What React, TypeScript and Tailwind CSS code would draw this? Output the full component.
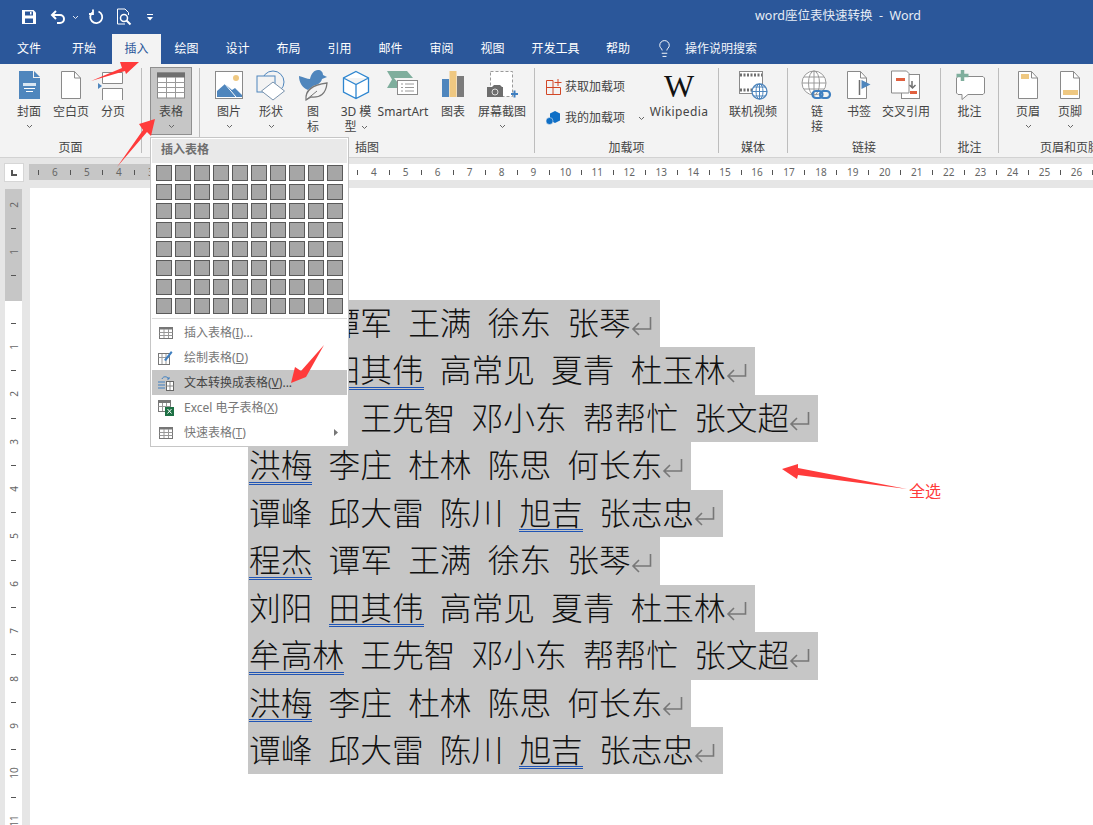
import { Lightbulb } from 'lucide-react';
import type { ReactNode } from 'react';

const UI_FONT = "font-['Noto_Sans','Noto_Sans_CJK_SC',sans-serif]";

// u = double blue underline from the grammar checker
const lines: { t: string; u?: boolean }[][] = [
  [{ t: '程杰', u: true }, { t: '谭军' }, { t: '王满' }, { t: '徐东' }, { t: '张琴' }],
  [{ t: '刘阳' }, { t: '田其伟', u: true }, { t: '高常见' }, { t: '夏青' }, { t: '杜玉林' }],
  [{ t: '牟高林', u: true }, { t: '王先智' }, { t: '邓小东' }, { t: '帮帮忙' }, { t: '张文超' }],
  [{ t: '洪梅', u: true }, { t: '李庄' }, { t: '杜林' }, { t: '陈思' }, { t: '何长东' }],
  [{ t: '谭峰' }, { t: '邱大雷' }, { t: '陈川' }, { t: '旭吉', u: true }, { t: '张志忠' }],
];

const tabs = [
  { label: '文件', cls: 'w-[58px] text-white' },
  { label: '开始', cls: 'w-[52px] text-white' },
  { label: '插入', cls: 'w-[49px] ml-[2px] bg-[#f3f3f3] text-[#2b579a]' },
  { label: '绘图', cls: 'w-[51px] text-white' },
  { label: '设计', cls: 'w-[51px] text-white' },
  { label: '布局', cls: 'w-[51px] text-white' },
  { label: '引用', cls: 'w-[51px] text-white' },
  { label: '邮件', cls: 'w-[51px] text-white' },
  { label: '审阅', cls: 'w-[51px] text-white' },
  { label: '视图', cls: 'w-[51px] text-white' },
  { label: '开发工具', cls: 'w-[75px] text-white' },
  { label: '帮助', cls: 'w-[50px] text-white' },
];

function Chevron() {
  return (
    <svg width="7" height="5" viewBox="0 0 7 5" className="mx-auto">
      <path d="M1 1l2.5 2.5L6 1" fill="none" stroke="#666" strokeWidth="1" />
    </svg>
  );
}

function Sep() {
  return <div className="w-px my-[4px] bg-[#bdbdbd] shrink-0" />;
}

function RibbonButton({ w, icon, label, chevron, active }: { w: string; icon: ReactNode; label: ReactNode; chevron?: boolean; active?: boolean }) {
  return (
    <div className={`${w} shrink-0 h-[68px] flex flex-col items-center text-center leading-[14.5px] ${active ? 'bg-[#c6c6c6] border border-[#8f8f8f] pt-[2px]' : 'pt-[3px]'}`}>
      <div className="h-[35px] w-full flex justify-center items-start">{icon}</div>
      <div className="whitespace-nowrap">{label}</div>
      {chevron && <div className="h-[14px] flex items-center"><Chevron /></div>}
    </div>
  );
}

function Group({ w, pl, label, children }: { w: string; pl?: string; label: string; children: ReactNode }) {
  return (
    <div className={`${w} shrink-0 flex flex-col`}>
      <div className={`h-[73px] pt-[3px] flex ${pl ?? ''}`}>{children}</div>
      <div className="h-[20px] leading-[22px] text-center whitespace-nowrap">{label}</div>
    </div>
  );
}

function Page({ children, fill = '#fff' }: { children?: ReactNode; fill?: string }) {
  return (
    <svg width="24" height="30" viewBox="0 0 24 30">
      <path d="M2.5 1.5h13l6 6.5v20.5h-19z" fill={fill} stroke="#8a8a8a" />
      <path d="M15.5 1.5v6.5h6" fill="none" stroke="#8a8a8a" />
      {children}
    </svg>
  );
}

function CoverIcon() {
  return (
    <svg width="24" height="30" viewBox="0 0 24 30">
      <path d="M2 1h14v7h7v21H2z" fill="#4f86bd" />
      <path d="M17 1l6 6h-6z" fill="#4f86bd" />
      <path d="M6 13h13v3H6z" fill="#d9e6f2" />
      <path d="M7 18.5h11M9 21.5h7" stroke="#fff" />
    </svg>
  );
}

function BreakIcon() {
  return (
    <svg width="30" height="32" viewBox="0 0 30 32">
      <path d="M4.5 2.5h20v11h-20z" fill="#fff" stroke="#8a8a8a" />
      <path d="M4.5 30v-11.5h20V30" fill="#fff" stroke="#8a8a8a" />
      <path d="M0 13l4 3-4 3z" fill="#4f86bd" />
    </svg>
  );
}

function TableIcon() {
  return (
    <svg width="30" height="27" viewBox="0 0 30 27">
      <rect x="1.5" y="1" width="27" height="25" fill="#fff" stroke="#8a8a8a" />
      <rect x="1" y="0.5" width="28" height="5" fill="#6f6f6f" />
      <path d="M1.5 10.5h27M1.5 15.5h27M1.5 20.5h27M10.5 5v21M19.5 5v21" stroke="#9a9a9a" />
    </svg>
  );
}

function PictureIcon() {
  return (
    <svg width="30" height="30" viewBox="0 0 30 30">
      <rect x="1.5" y="1.5" width="27" height="27" fill="#fff" stroke="#8a8a8a" />
      <circle cx="22" cy="8" r="3" fill="#efc881" />
      <path d="M3 27v-6l8-7 7 6 3-2 7 7v2z" fill="#4f86bd" />
      <path d="M11 14l11 13" stroke="#fff" />
    </svg>
  );
}

function ShapesIcon() {
  return (
    <svg width="32" height="32" viewBox="0 0 32 32">
      <circle cx="18" cy="12" r="11" fill="none" stroke="#4f86bd" />
      <rect x="2" y="6" width="18" height="16" fill="#f3f3f3" stroke="#4f86bd" />
      <path d="M18 12l11.5 9-11.5 9-11.5-9z" fill="#fff" stroke="#7a93ad" />
    </svg>
  );
}

function IconsIcon() {
  return (
    <svg width="32" height="32" viewBox="0 0 32 32">
      <path d="M2 6c5 1 8 3 11 3 1-5 4-9 8-9 3 0 5 2 5 5l4 2-5 2c-1 4-5 6-9 7l-5 4C5 18 2 12 2 6z" fill="#4f86bd" />
      <path d="M9 30c-1-9 5-15 21-17-1 11-7 15-16 14z" fill="#f3f3f3" stroke="#777" strokeWidth="1.3" />
      <path d="M9 30l11-9" stroke="#777" />
    </svg>
  );
}

function CubeIcon() {
  return (
    <svg width="30" height="30" viewBox="0 0 30 30">
      <path d="M15 1.5L27.5 8v14L15 28.5 2.5 22V8zM2.5 8L15 14.5 27.5 8M15 14.5v14" fill="#fff" stroke="#2e86d0" strokeWidth="1.3" />
    </svg>
  );
}

function SmartArtIcon() {
  return (
    <svg width="32" height="30" viewBox="0 0 32 30">
      <path d="M0 1h20l6 7H7l5 6-2 4H0l5-8.5z" fill="#7fae9d" />
      <rect x="10.5" y="10.5" width="20" height="14" fill="#fff" stroke="#8a8a8a" />
      <path d="M14 14h2M18 14h9M14 17.5h2M18 17.5h9M14 21h2M18 21h9" stroke="#9a9a9a" />
    </svg>
  );
}

function ChartIcon() {
  return (
    <svg width="24" height="28" viewBox="0 0 24 28">
      <rect x="1" y="9" width="7" height="18" fill="#4f86bd" />
      <rect x="8.5" y="1" width="7" height="26" fill="#efc881" />
      <rect x="16" y="6" width="7" height="21" fill="#7b7b7b" />
    </svg>
  );
}

function ScreenshotIcon() {
  return (
    <svg width="32" height="30" viewBox="0 0 32 30">
      <rect x="4.5" y="1.5" width="22" height="25" fill="#fff" stroke="#9a9a9a" strokeDasharray="3 2" />
      <path d="M1 17h5l2-2h6l2 2h1v10H1z" fill="#6d6d6d" />
      <circle cx="9" cy="22" r="3" fill="#6d6d6d" stroke="#ddd" />
      <path d="M25 24h7M28.5 20.5v7" stroke="#3f7fc0" strokeWidth="2" />
    </svg>
  );
}

function GetAddinIcon() {
  return (
    <svg width="16" height="16" viewBox="0 0 16 16">
      <path d="M0.5 1.5h6.5v14H0.5zM7 8.5H0.5M7 8.5h7.5v7H7" fill="none" stroke="#d24726" />
      <path d="M12 0v7M8.5 3.5h7" stroke="#d24726" />
    </svg>
  );
}

function MyAddinIcon() {
  return (
    <svg width="16" height="14" viewBox="0 0 16 14">
      <path d="M9 0l5 2.5v7L9 12 4 9.5v-7z" fill="#0f6fc6" />
      <circle cx="3.5" cy="10" r="3.5" fill="#0f6fc6" stroke="#f3f3f3" strokeWidth="0.5" />
    </svg>
  );
}

function VideoIcon() {
  return (
    <svg width="30" height="30" viewBox="0 0 30 30">
      <rect x="1.5" y="1.5" width="23" height="22" fill="#fff" stroke="#8a8a8a" />
      <path d="M2 5h22M2 20h22" stroke="#6f6f6f" strokeWidth="3" strokeDasharray="2 1.5" />
      <circle cx="21.5" cy="21.5" r="7.5" fill="#fff" stroke="#4f86bd" strokeWidth="1.3" />
      <path d="M14 21.5h15M21.5 14v15M16 17h11M16 26h11" stroke="#4f86bd" />
      <ellipse cx="21.5" cy="21.5" rx="3.5" ry="7.5" fill="none" stroke="#4f86bd" />
    </svg>
  );
}

function LinkIcon() {
  return (
    <svg width="32" height="32" viewBox="0 0 32 32">
      <circle cx="13" cy="13" r="12" fill="#fff" stroke="#9a9a9a" />
      <ellipse cx="13" cy="13" rx="5.5" ry="12" fill="none" stroke="#9a9a9a" />
      <path d="M1 13h24M3 7h20M3 19h20M13 1v24" stroke="#9a9a9a" />
      <rect x="11.5" y="21" width="10" height="7" rx="3.5" fill="none" stroke="#3f7fc0" strokeWidth="2.2" />
      <rect x="19" y="21" width="10" height="7" rx="3.5" fill="none" stroke="#3f7fc0" strokeWidth="2.2" />
    </svg>
  );
}

function BookmarkIcon() {
  return (
    <svg width="26" height="30" viewBox="0 0 26 30">
      <path d="M1.5 1.5h13l6 6.5v20.5h-19z" fill="#fff" stroke="#8a8a8a" />
      <path d="M14.5 1.5v6.5h6" fill="none" stroke="#8a8a8a" />
      <path d="M13.5 10v15" stroke="#6f6f6f" strokeWidth="1.5" />
      <path d="M15.5 10l9 4.5-9 4.5z" fill="#4f86bd" />
    </svg>
  );
}

function CrossRefIcon() {
  return (
    <svg width="32" height="30" viewBox="0 0 32 30">
      <rect x="11.5" y="4.5" width="18" height="24" fill="#fff" stroke="#8a8a8a" />
      <path d="M1.5 1h15l2.5 2.5v19.5H1.5z" fill="#fff" stroke="#8a8a8a" />
      <rect x="6" y="8" width="9" height="3" fill="#e0603f" />
      <rect x="20" y="21" width="7" height="3" fill="#e0603f" />
      <path d="M22 11v6M19.5 15l3 3 3-3" fill="none" stroke="#6f6f6f" strokeWidth="1.5" />
    </svg>
  );
}

function CommentIcon() {
  return (
    <svg width="32" height="30" viewBox="0 0 32 30">
      <path d="M4 6.5h25l1.5 1.5v15l-1.5 1.5H14l-6 5v-5H4l-1.5-1.5V8z" fill="#fff" stroke="#8a8a8a" />
      <path d="M8.5 0v11M2.5 5.5h12" stroke="#7fae9d" strokeWidth="3.5" />
    </svg>
  );
}

function MiniGrid() {
  return (
    <svg width="14" height="12" viewBox="0 0 14 12">
      <rect x="0.5" y="0.5" width="13" height="11" fill="#fff" stroke="#777" />
      <path d="M0.5 1.5h13" stroke="#777" strokeWidth="2" />
      <path d="M0.5 5.5h13M0.5 8.5h13M5 2v9M9.5 2v9" stroke="#999" />
    </svg>
  );
}

function MenuRow({ icon, active, children, arrow }: { icon: ReactNode; active?: boolean; children: ReactNode; arrow?: boolean }) {
  return (
    <div className={`h-[25px] flex items-center relative ${active ? 'bg-[#c6c6c6] text-[#444]' : 'text-[#777]'}`}>
      <div className="w-[25px] ml-[1px] mr-[6px] flex justify-center">{icon}</div>
      <div className="whitespace-nowrap">{children}</div>
      {arrow && (
        <svg width="4" height="7" viewBox="0 0 4 7" className="ml-auto mr-[9px]">
          <path d="M0 0l4 3.5L0 7z" fill="#777" />
        </svg>
      )}
    </div>
  );
}

function TableMenu() {
  const cells = Array.from({ length: 80 }, (_, i) => i);
  return (
    <div className={`absolute left-[150px] top-[137px] w-[199px] h-[310px] bg-white border border-[#c6c6c6] text-[12px] ${UI_FONT}`}>
      <div className="h-[24px] mx-px mt-px bg-[#e9e9e9] pl-[9px] leading-[22px] font-bold text-[#6f6f6f]">插入表格</div>
      <div className="grid grid-cols-[repeat(10,16px)] gap-[3px] pl-[5px] pt-[2px]">
        {cells.map((i) => (
          <div key={i} className="h-[16px] bg-[#a6a6a6] border border-[#5a5a5a]" />
        ))}
      </div>
      <div className="mt-[4px] mx-px border-t border-[#dcdcdc] pt-[1px] flex flex-col">
        <MenuRow icon={<MiniGrid />}>插入表格(<span className="underline">I</span>)...</MenuRow>
        <MenuRow
          icon={
            <svg width="15" height="15" viewBox="0 0 15 15">
              <rect x="0.5" y="3.5" width="11" height="11" fill="#fff" stroke="#777" />
              <path d="M0.5 7.5h11M4 4v10M8 4v10" stroke="#999" />
              <path d="M6 10l7-9 1.5 1.5L8 11z" fill="#3f7fc0" />
            </svg>
          }
        >
          绘制表格(<span className="underline">D</span>)
        </MenuRow>
        <MenuRow
          active
          icon={
            <svg width="16" height="16" viewBox="0 0 16 16">
              <path d="M4 4c1-3 5-3 7 0M11 4l-2 0M11 4V2" fill="none" stroke="#3f7fc0" />
              <path d="M0 7h7M0 10h7M0 13h7" stroke="#3f7fc0" />
              <rect x="8.5" y="6.5" width="7" height="9" fill="#fff" stroke="#666" />
              <path d="M8.5 11h7M12 7v8" stroke="#888" />
            </svg>
          }
        >
          文本转换成表格(<span className="underline">V</span>)...
        </MenuRow>
        <MenuRow
          icon={
            <svg width="16" height="16" viewBox="0 0 16 16">
              <rect x="0.5" y="0.5" width="12" height="11" fill="#fff" stroke="#777" />
              <path d="M0.5 2h12" stroke="#777" strokeWidth="2" />
              <path d="M4.5 3v8M8.5 3v8M0.5 6.5h12" stroke="#999" />
              <rect x="7" y="7" width="9" height="9" fill="#1d7044" />
              <path d="M9.5 9l4 4.5M13.5 9l-4 4.5" stroke="#fff" />
            </svg>
          }
        >
          Excel 电子表格(<span className="underline">X</span>)
        </MenuRow>
        <MenuRow icon={<MiniGrid />} arrow>快速表格(<span className="underline">T</span>)</MenuRow>
      </div>
    </div>
  );
}

function ParaMark() {
  return (
    <svg width="29" height="20" viewBox="0 0 29 20" className="inline-block align-[-1px]">
      <path d="M19.5 1v12H2M8 7l-6 6 6 6" fill="none" stroke="#777" strokeWidth="1.6" />
    </svg>
  );
}

function DocLine({ parts }: { parts: { t: string; u?: boolean }[] }) {
  return (
    <div className="w-fit h-[47.45px] bg-[#c6c6c6] leading-[43px] whitespace-nowrap pl-px text-[31.7px] font-light text-[#111] font-['Noto_Sans_CJK_SC','Noto_Sans',sans-serif]">
      {parts.map((p, i) => (
        <span key={i} className={i < parts.length - 1 ? 'mr-[16.2px]' : ''}>
          <span className={p.u ? 'inline-block h-[39.5px] leading-[36px] border-b-[3px] border-double border-[#2055b5]' : ''}>{p.t}</span>
        </span>
      ))}
      <ParaMark />
    </div>
  );
}

export default function App() {
  const hCellsLeft = ['', '6', '', '5', '', '4', '', '3', '', '2', '', '1', ''];
  const hCellsRight: string[] = [];
  for (let n = 1; n <= 26; n++) hCellsRight.push('', String(n));
  hCellsRight.push('');
  const vCells: string[] = ['2', '', '1', '', '', '', '1', '', '2', '', '3', '', '4', '', '5', '', '6', '', '7', '', '8', '', '9', '', '10', '', '11'];

  return (
    <div className={`relative w-[1093px] h-[825px] overflow-hidden bg-white text-[12px] text-[#444] ${UI_FONT}`}>
      {/* title bar */}
      <div className="h-[34px] bg-[#2b579a] flex items-center text-white">
        <div className="w-[755px] shrink-0 flex items-center pl-[21px]">
          <svg width="16" height="16" viewBox="0 0 16 16">
            <path d="M1 1h11.5L15 3.5V15H1z" fill="#fff" />
            <rect x="4" y="2.5" width="8" height="4" fill="#2b579a" />
            <rect x="4" y="9.5" width="8" height="4.5" fill="#2b579a" />
            <rect x="9" y="3" width="1.5" height="2.5" fill="#fff" />
          </svg>
          <svg width="16" height="16" viewBox="0 0 16 16" className="ml-[13px]">
            <path d="M2 6h8a4 4 0 0 1 0 8H7M6 2L2 6l4 4" fill="none" stroke="#fff" strokeWidth="2" />
          </svg>
          <svg width="7" height="5" viewBox="0 0 7 5" className="ml-[6px]">
            <path d="M1 1l2.5 2.5L6 1" fill="none" stroke="#dfe6f1" />
          </svg>
          <svg width="16" height="16" viewBox="0 0 16 16" className="ml-[9px]">
            <path d="M10.5 2.5A6 6 0 1 1 5 3M5 0.5V5H1" fill="none" stroke="#fff" strokeWidth="1.8" />
          </svg>
          <svg width="16" height="18" viewBox="0 0 16 18" className="ml-[12px]">
            <path d="M9 1H1.5v15H9M9 1l3.5 3.5V7" fill="none" stroke="#fff" />
            <circle cx="8" cy="10" r="3.5" fill="none" stroke="#fff" strokeWidth="1.5" />
            <path d="M10.5 12.5L14.5 16.5" stroke="#fff" strokeWidth="2" />
          </svg>
          <svg width="8" height="8" viewBox="0 0 8 8" className="ml-[14px]">
            <path d="M1 1.5h6" stroke="#fff" />
            <path d="M1 4h6L4 7.5z" fill="#fff" />
          </svg>
        </div>
        <div className="whitespace-pre text-[12.5px] leading-[30px] pb-[2px] text-[#e6ecf5]">word座位表快速转换  -  Word</div>
      </div>

      {/* tabs */}
      <div className="h-[30px] bg-[#2b579a] flex items-stretch">
        {tabs.map((t) => (
          <div key={t.label} className={`${t.cls} shrink-0 text-center leading-[29px]`}>{t.label}</div>
        ))}
        <div className="flex items-center ml-[12px] pb-[1px] text-[#f1f4f9]">
          <Lightbulb size={19} strokeWidth={1.2} color="#fff" />
          <span className="ml-[11px]">操作说明搜索</span>
        </div>
      </div>

      {/* ribbon */}
      <div className="h-[94px] bg-[#f3f3f3] border-b border-[#d2d2d2] flex">
        <Group w="w-[141px]" pl="pl-[8px]" label="页面">
          <RibbonButton w="w-[42px]" icon={<CoverIcon />} label="封面" chevron />
          <RibbonButton w="w-[42px]" icon={<Page />} label="空白页" />
          <RibbonButton w="w-[42px]" icon={<BreakIcon />} label="分页" />
        </Group>
        <Sep />
        <Group w="w-[57px]" pl="pl-[8px]" label="">
          <RibbonButton w="w-[42px]" active icon={<div className="pt-[2px]"><TableIcon /></div>} label="表格" chevron />
        </Group>
        <Sep />
        <Group w="w-[334px]" pl="pl-[8px]" label="插图">
          <RibbonButton w="w-[42px]" icon={<PictureIcon />} label="图片" chevron />
          <RibbonButton w="w-[42px]" icon={<ShapesIcon />} label="形状" chevron />
          <RibbonButton w="w-[42px]" icon={<IconsIcon />} label={<>图<br />标</>} />
          <RibbonButton w="w-[44px]" icon={<CubeIcon />} label={<>3D 模<br />型 <span className="inline-block ml-[1px] align-middle"><Chevron /></span></>} />
          <RibbonButton w="w-[50px]" icon={<SmartArtIcon />} label="SmartArt" />
          <RibbonButton w="w-[50px]" icon={<ChartIcon />} label="图表" />
          <RibbonButton w="w-[48px]" icon={<ScreenshotIcon />} label="屏幕截图" chevron />
        </Group>
        <Sep />
        <Group w="w-[183px]" label="加载项">
          <div className="w-[116px] shrink-0 pl-[11px] pt-[11px] flex flex-col gap-[13px]">
            <div className="h-[18px] flex items-center gap-[3px] whitespace-nowrap"><GetAddinIcon />获取加载项</div>
            <div className="h-[18px] flex items-center gap-[3px] whitespace-nowrap">
              <MyAddinIcon />我的加载项
              <span className="ml-[10px]"><Chevron /></span>
            </div>
          </div>
          <RibbonButton
            w="w-[56px]"
            icon={<div className="font-['Liberation_Serif',serif] text-[#111] text-[32px] leading-[32px]">W</div>}
            label={<span className="tracking-[0.4px]">Wikipedia</span>}
          />
        </Group>
        <Sep />
        <Group w="w-[68px]" label="媒体">
          <div className="w-full flex justify-center">
            <RibbonButton w="w-[56px]" icon={<VideoIcon />} label="联机视频" />
          </div>
        </Group>
        <Sep />
        <Group w="w-[152px]" pl="pl-[8px]" label="链接">
          <RibbonButton w="w-[42px]" icon={<LinkIcon />} label={<>链<br />接</>} />
          <RibbonButton w="w-[42px]" icon={<BookmarkIcon />} label="书签" />
          <RibbonButton w="w-[52px]" icon={<CrossRefIcon />} label="交叉引用" />
        </Group>
        <Sep />
        <Group w="w-[57px]" label="批注">
          <div className="w-full flex justify-center">
            <RibbonButton w="w-[42px]" icon={<CommentIcon />} label="批注" />
          </div>
        </Group>
        <Sep />
        <Group w="w-[142px]" pl="pl-[8px]" label="页眉和页脚">
          <RibbonButton
            w="w-[42px]"
            icon={<Page><rect x="5" y="4" width="8" height="5" fill="#efc881" /></Page>}
            label="页眉"
            chevron
          />
          <RibbonButton
            w="w-[42px]"
            icon={<Page><rect x="5" y="20" width="15" height="5" fill="#efc881" /></Page>}
            label="页脚"
            chevron
          />
        </Group>
      </div>

      {/* horizontal ruler */}
      <div className="h-[30px] bg-[#e6e6e6] flex">
        <div className="w-[29px] h-[24px] shrink-0 pl-[4px] pt-[5px]">
          <div className="w-[20px] h-[19px] bg-white border border-[#d6d6d6] flex items-center justify-center">
            <div className="w-[6px] h-[6px] border-l-2 border-b-2 border-[#555]" />
          </div>
        </div>
        <div className="h-[16px] mt-[6px] flex-1 flex text-[10px] text-[#666]">
          <div className="w-[218px] shrink-0 bg-[#c6c6c6] pl-[2px] flex">
            {hCellsLeft.map((c, i) => (
              <div key={i} className="w-[15.975px] shrink-0 flex items-center justify-center leading-none">
                {c || <div className="w-px h-[5px] bg-[#555]" />}
              </div>
            ))}
          </div>
          <div className="flex-1 bg-white pl-[7px] flex">
            {hCellsRight.map((c, i) => (
              <div key={i} className="w-[15.975px] shrink-0 flex items-center justify-center leading-none">
                {c || <div className="w-px h-[5px] bg-[#555]" />}
              </div>
            ))}
          </div>
        </div>
      </div>

      {/* vertical ruler + page */}
      <div className="flex h-[637px]">
        <div className="w-[30px] shrink-0 bg-[#e6e6e6] pl-[5px] pt-px">
          <div className="w-[17px] h-full relative bg-white overflow-hidden">
            <div className="h-[112px] bg-[#c6c6c6]" />
            <div className="absolute inset-0 pt-[4px] flex flex-col text-[10px] text-[#666]">
              {vCells.map((c, i) => (
                <div key={i} className="h-[23.7px] shrink-0 flex items-center justify-center leading-none">
                  {c ? <span className="-rotate-90">{c}</span> : i === 4 ? null : <div className="w-[5px] h-px bg-[#555]" />}
                </div>
              ))}
            </div>
          </div>
        </div>
        <div className="flex-1 bg-white pl-[218px] pt-[112px]">
          {[...lines, ...lines].map((l, i) => (
            <DocLine key={i} parts={l} />
          ))}
        </div>
      </div>

      <TableMenu />

      {/* red annotation arrows drawn over the screenshot */}
      <svg width="1093" height="825" viewBox="0 0 1093 825" className="absolute inset-0 pointer-events-none">
        <path d="M91 81L122 68L120 62H139L126 74L125 71Z" fill="#ff3b3b" />
        <path d="M117 167L143 130L139 124L155 119L151 136L147 132Z" fill="#ff3b3b" />
        <path d="M324 345L306 377L291 383L295 367L301 371Z" fill="#ff3b3b" />
        <path d="M782 469L798 464L798 468L907 489L798 475L797 479Z" fill="#ff3b3b" />
      </svg>
      <div className="absolute left-[909px] top-[482px] text-[16px] leading-[18px] text-[#ff3b3b]">全选</div>
    </div>
  );
}
